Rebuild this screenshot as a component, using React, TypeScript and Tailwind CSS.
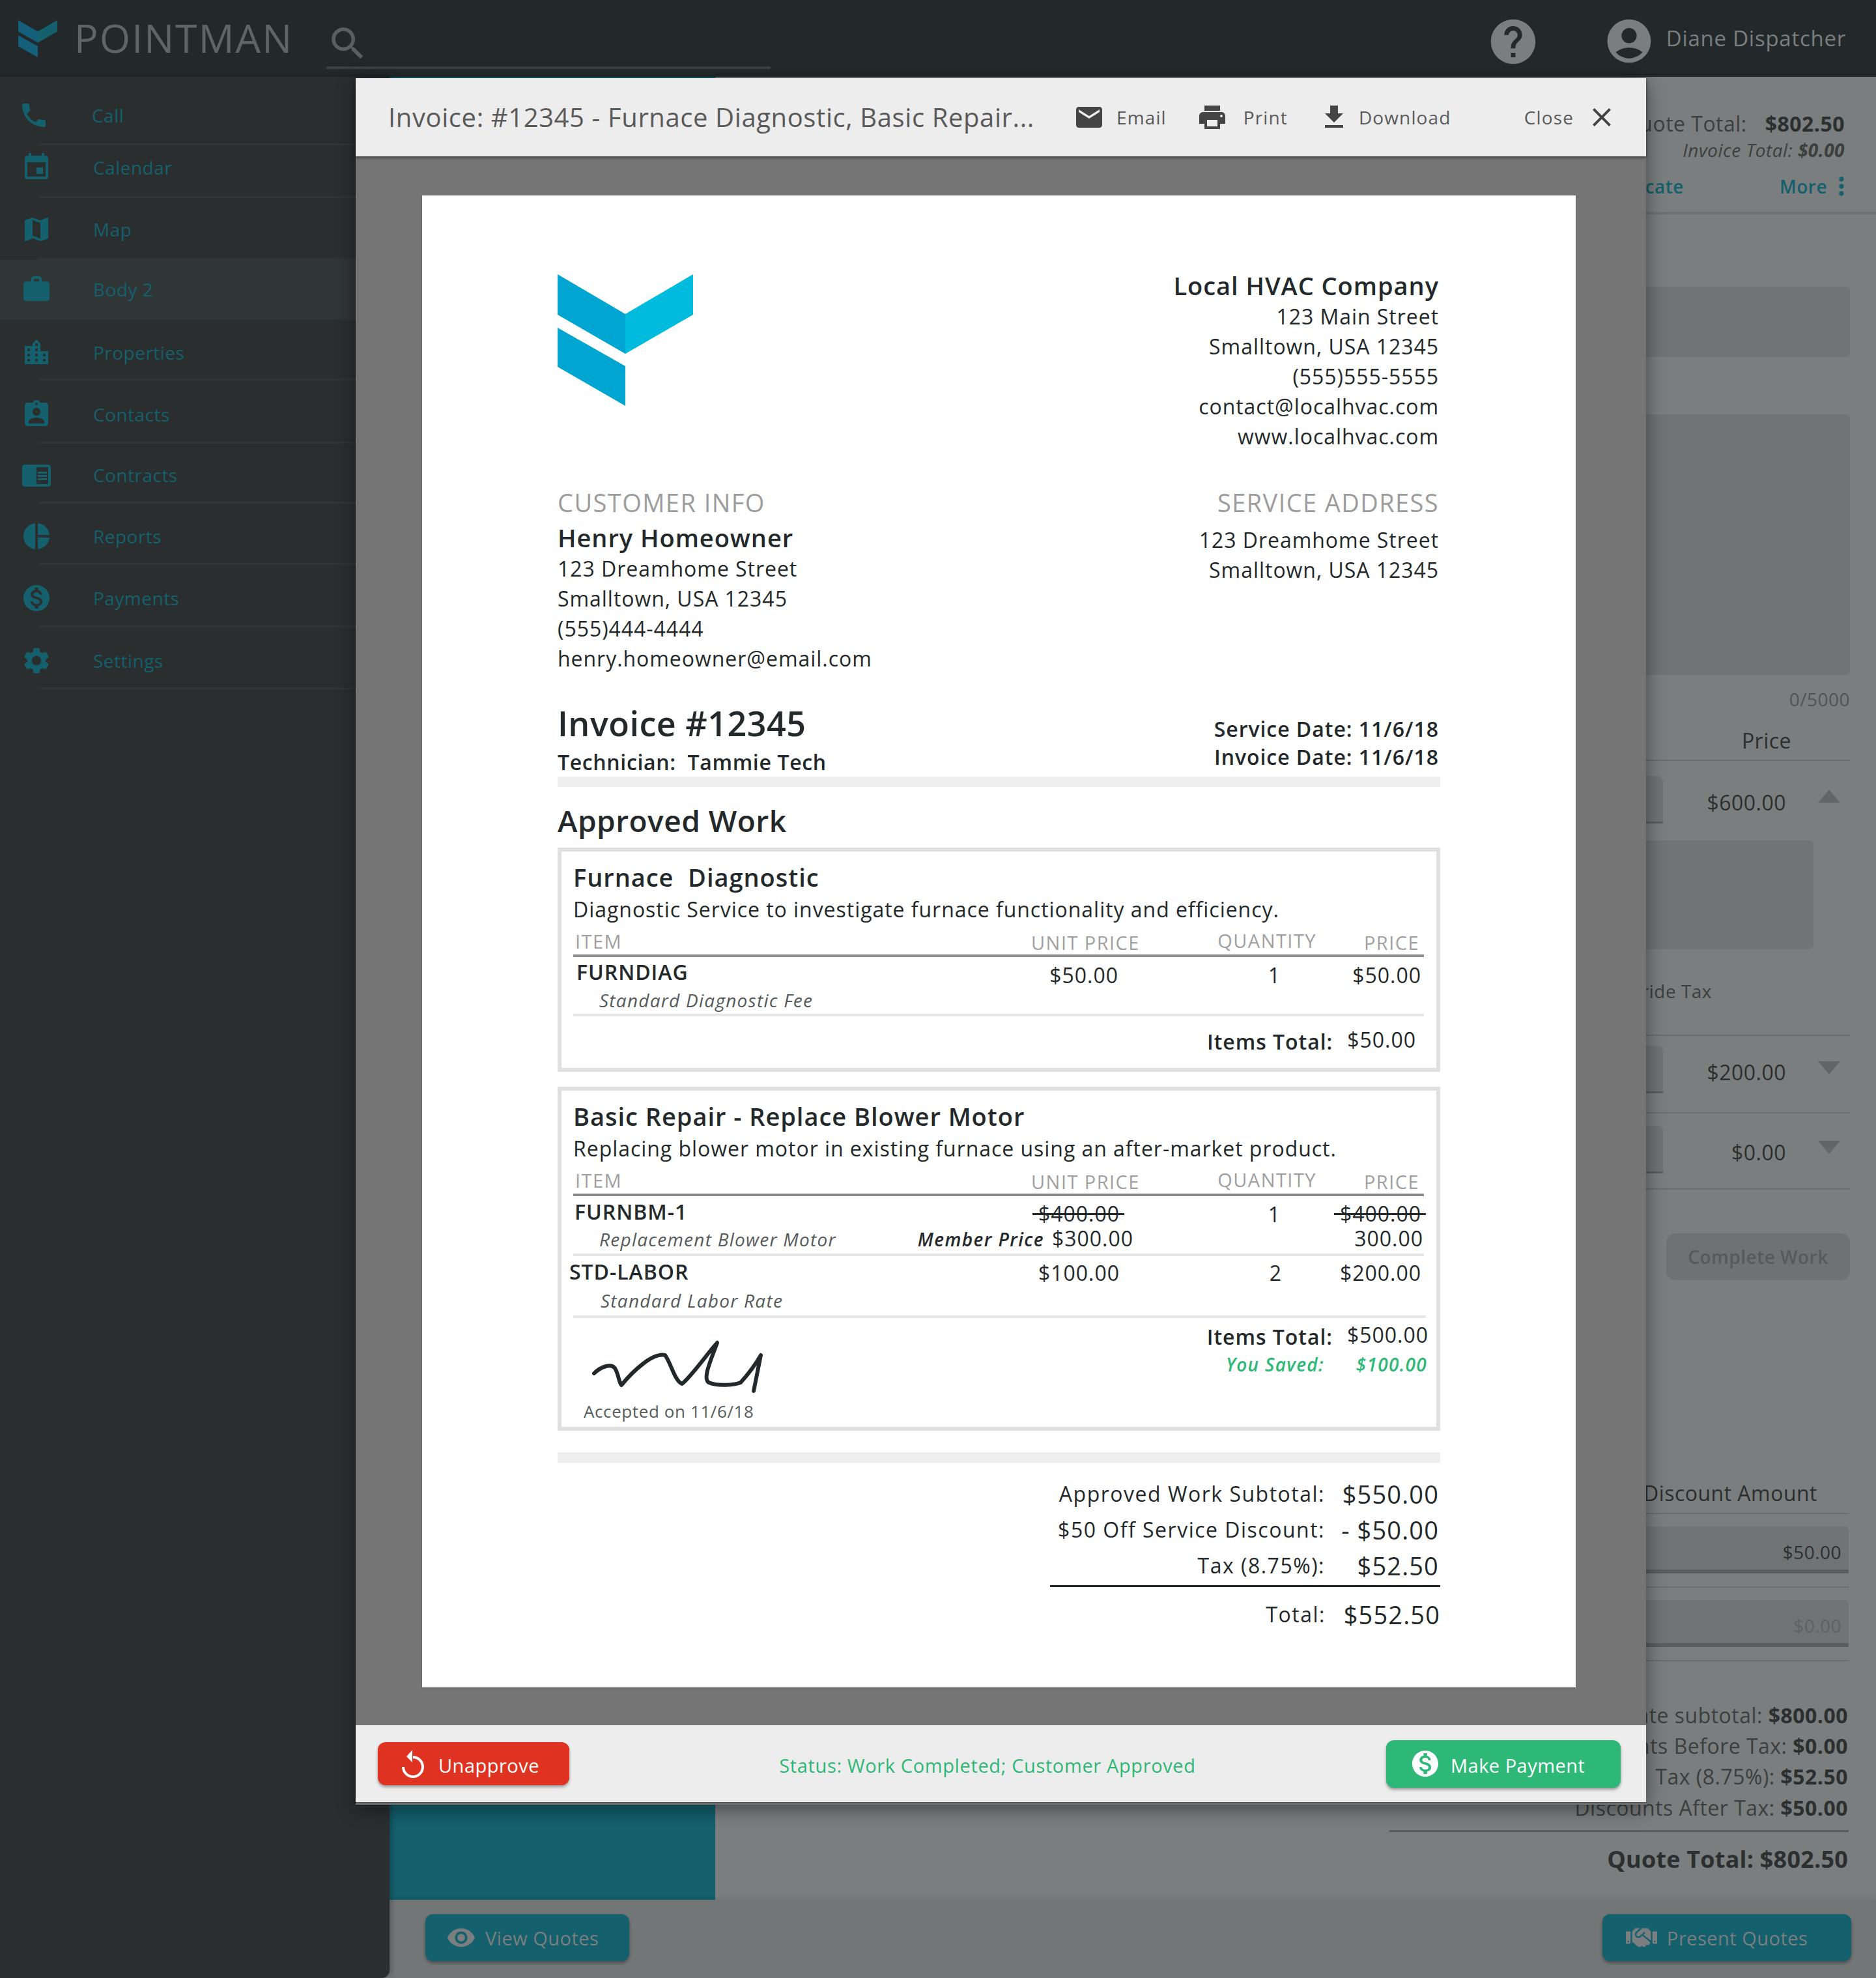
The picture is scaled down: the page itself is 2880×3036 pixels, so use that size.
import {
  MdPhone, MdEvent, MdMap, MdWork, MdLocationCity, MdAssignmentInd, MdChromeReaderMode, MdPieChart,
  MdMonetizationOn, MdSettings, MdEmail, MdPrint, MdFileDownload, MdClose, MdHelp, MdAccountCircle,
  MdVisibility, MdMoreVert, MdSearch,
} from "react-icons/md";
import { FaHandshake } from "react-icons/fa";

const navItems = [
  { label: "Call", Icon: MdPhone, row: "h-[105px] pt-[12px]", textPos: "ml-[65px]", iconPos: "ml-[28px]" },
  { label: "Calendar", Icon: MdEvent, row: "h-[81px] pb-[14px]", textPos: "ml-[63px]", iconPos: "ml-[32px]" },
  { label: "Map", Icon: MdMap, row: "h-[95px]", textPos: "ml-[63px]", iconPos: "ml-[32px]" },
  { label: "Body 2", Icon: MdWork, row: "h-[92px] pb-[2px] bg-[#303536]", textPos: "ml-[63px]", iconPos: "ml-[32px]" },
  { label: "Properties", Icon: MdLocationCity, row: "h-[93px] pt-[6px]", textPos: "ml-[63px]", iconPos: "ml-[32px]" },
  { label: "Contacts", Icon: MdAssignmentInd, row: "h-[97px] pt-[6px]", textPos: "ml-[63px]", iconPos: "ml-[32px]" },
  { label: "Contracts", Icon: MdChromeReaderMode, row: "h-[92px] pt-[4px]", textPos: "ml-[63px]", iconPos: "ml-[32px]" },
  { label: "Reports", Icon: MdPieChart, row: "h-[94px] pt-[6px]", textPos: "ml-[63px]", iconPos: "ml-[32px]" },
  { label: "Payments", Icon: MdMonetizationOn, row: "h-[96px] pt-[6px]", textPos: "ml-[63px]", iconPos: "ml-[32px]" },
  { label: "Settings", Icon: MdSettings, row: "h-[95px] pt-[6px]", textPos: "ml-[63px]", iconPos: "ml-[32px]" },
];

function Logo({ className, left, right }: { className: string; left: string; right: string }) {
  return (
    <svg viewBox="0 0 208 202" preserveAspectRatio="none" className={className}>
      <polygon points="0,0 104,61 104,122 0,62" fill={left} />
      <polygon points="104,61 208,0 208,62 104,122" fill={right} />
      <polygon points="0,82 104,141 104,202 0,142" fill={left} />
    </svg>
  );
}

function Header() {
  return (
    <div className="h-[118px] shrink-0 bg-[#23292a] flex items-start">
      <Logo className="w-[60px] h-[57px] ml-[28px] mt-[31px]" left="#14607a" right="#14606d" />
      <div className="ml-[26px] w-[387px] h-[114px] flex items-center text-[61px] leading-none tracking-[2px] text-[#5f6464]">POINTMAN</div>
      <div className="mt-[28px] w-[682px] h-[78px] border-b-4 border-[#3c4242]">
        <MdSearch size={66} className="text-[#5a5f5f] mt-[6px]" />
      </div>
      <div className="ml-auto flex items-center h-[118px]">
        <MdHelp size={82} className="text-[#7a7e7e] mb-[-10px]" />
        <MdAccountCircle size={80} className="text-[#7a7e7e] ml-[97px] mb-[-8px]" />
        <span className="ml-[17px] mr-[46px] text-[33px] tracking-[0.75px] text-[#7a7e7e]">Diane Dispatcher</span>
      </div>
    </div>
  );
}

function Sidebar() {
  return (
    <div className="w-[598px] shrink-0 bg-[#2a2e2f] rounded-br-[12px] shadow-[2px_0_8px_rgba(0,0,0,0.3)] z-10">
      {navItems.map(({ label, Icon, row, textPos, iconPos }) => (
        <div key={label}>
          <div className={`flex items-center ${row}`}>
            <Icon size={48} className={`shrink-0 text-[#14606d] ${iconPos}`} />
            <span className={`text-[28px] text-[#14606d] ${textPos}`}>{label}</span>
          </div>
          <div className="ml-[60px] h-[3px] bg-[#303536] -mt-[3px]" />
        </div>
      ))}
    </div>
  );
}

function InputStub() {
  return <div className="w-[300px] h-[73px] rounded-t-[8px] bg-[#707474] border-b-[3px] border-[#5a5e5e]" />;
}

function Arrow({ up }: { up?: boolean }) {
  return (
    <svg viewBox="0 0 34 20" className="w-[34px] h-[20px] ml-[49px]">
      <polygon points={up ? "0,20 17,0 34,20" : "0,0 17,20 34,0"} fill="#626666" />
    </svg>
  );
}

function PriceRow({ price, arrowUp, rowClass, arrowClass }: { price: string; arrowUp?: boolean; rowClass: string; arrowClass: string }) {
  return (
    <div className={`flex justify-end pr-[15px] ${rowClass}`}>
      <InputStub />
      <div className="w-[189px] h-[73px] flex items-center justify-end pt-[8px] text-[32px] font-medium text-[#2b2f2f]">{price}</div>
      <div className={arrowClass}><Arrow up={arrowUp} /></div>
    </div>
  );
}

function Behind() {
  return (
    <div className="flex-1 flex min-h-0">
      <div className="w-[500px] shrink-0 bg-[#14606d]" />
      <div className="flex-1 flex flex-col pr-[40px]">
        <div className="h-[211px] shrink-0 border-b-4 border-[#6e7272] -mr-[40px] pr-[48px] pt-[50px] flex flex-col items-end">
          <div className="h-[44px] flex items-center text-[32px] text-[#3b3f3f]">
            Quote Total:<span className="ml-[28px] font-bold text-[#2b2f2f]">$802.50</span>
          </div>
          <div className="h-[40px] -mt-[2px] flex items-center text-[28px] italic text-[#3b3f3f]">
            Invoice Total:&nbsp;<span className="font-bold">$0.00</span>
          </div>
          <div className="h-[44px] mt-[14px] mr-[-2px] flex items-center text-[28px] font-semibold text-[#14606d]">
            <span>Duplicate</span>
            <span className="ml-[147px]">More</span>
            <MdMoreVert size={44} className="-mr-[15px]" />
          </div>
        </div>
        <div className="h-[108px] mt-[111px] shrink-0 bg-[#707474] rounded-[6px]" />
        <div className="h-[400px] mt-[88px] shrink-0 bg-[#707474] rounded-[6px]" />
        <div className="h-[36px] mt-[19px] flex items-center justify-end text-[28px] text-[#505454]">0/5000</div>
        <div className="h-[44px] mt-[24px] flex items-center justify-end text-[32px] font-medium text-[#2b2f2f]">
          <span className="mr-[90px]">Price</span>
        </div>
        <div className="mt-[7px] h-[2px] shrink-0 bg-[#6a6e6e]" />
        <PriceRow price="$600.00" arrowUp rowClass="mt-[23px]" arrowClass="mt-[21px]" />
        <div className="h-[167px] mt-[26px] mr-[56px] shrink-0 bg-[#707474] rounded-[6px]" />
        <div className="h-[40px] mt-[44px] pr-[212px] flex items-center justify-end text-[28px] text-[#3b3f3f]">Override Tax</div>
        <div className="mt-[47px] h-[2px] shrink-0 bg-[#6a6e6e]" />
        <PriceRow price="$200.00" rowClass="mt-[15px]" arrowClass="mt-[24px]" />
        <div className="mt-[29px] h-[2px] shrink-0 bg-[#6a6e6e]" />
        <PriceRow price="$0.00" rowClass="mt-[19px]" arrowClass="mt-[23px]" />
        <div className="mt-[23px] h-[2px] shrink-0 bg-[#6a6e6e]" />
        <div className="mt-[67px] ml-auto w-[282px] h-[72px] shrink-0 rounded-[14px] bg-[#6e7272] flex items-center justify-center text-[28px] font-semibold text-[#565a5a]">
          Complete Work
        </div>
        <div className="mt-[305px] h-[44px] pr-[50px] flex items-center justify-end text-[32px] font-medium text-[#2b2f2f]">Discount Amount</div>
        <div className="mt-[8px] h-[2px] mr-[2px] shrink-0 bg-[#6a6e6e]" />
        <div className="mt-[19px] h-[72px] mr-[2px] shrink-0 rounded-t-[6px] bg-[#707474] border-b-[6px] border-[#5a5e5e] flex items-end justify-end pr-[11px] pb-[6px] text-[28px] text-[#2b2f2f]">$50.00</div>
        <div className="mt-[20px] h-[2px] mr-[2px] shrink-0 bg-[#6a6e6e]" />
        <div className="mt-[19px] h-[72px] mr-[2px] shrink-0 rounded-t-[6px] bg-[#707474] border-b-[6px] border-[#5a5e5e] flex items-end justify-end pr-[11px] pb-[6px] text-[28px] text-[#5e6262]">$0.00</div>
        <div className="mt-[20px] h-[2px] mr-[2px] shrink-0 bg-[#6a6e6e]" />
        <div className="mt-[59px] pr-[3px] flex flex-col items-end text-[32px] text-[#3b3f3f]">
          <div className="h-[47px] flex items-center">Estimate subtotal:&nbsp;<b className="text-[#2b2f2f]">$800.00</b></div>
          <div className="h-[47px] flex items-center">Discounts Before Tax:&nbsp;<b className="text-[#2b2f2f]">$0.00</b></div>
          <div className="h-[48px] flex items-center">Tax (8.75%):&nbsp;<b className="text-[#2b2f2f]">$52.50</b></div>
          <div className="h-[48px] flex items-center">Discounts After Tax:&nbsp;<b className="text-[#2b2f2f]">$50.00</b></div>
        </div>
        <div className="mt-[10px] ml-auto mr-[2px] w-[705px] h-[3px] shrink-0 bg-[#565a5a]" />
        <div className="mt-[17px] pr-[3px] h-[50px] flex items-center justify-end text-[36px] tracking-[0.2px] font-bold text-[#2b2f2f]">Quote Total: $802.50</div>
      </div>
    </div>
  );
}

function BehindFooter() {
  return (
    <div className="h-[120px] shrink-0 bg-[#727676] shadow-[0_-4px_8px_rgba(0,0,0,0.05)] flex items-start justify-between pt-[22px] pl-[55px] pr-[38px] z-[1]">
      <div className="w-[313px] h-[72px] rounded-[12px] bg-[#14606d] shadow-[0_3px_5px_rgba(0,0,0,0.35)] flex items-center pl-[32px] text-[29px] font-medium text-[#7a7e7e]">
        <MdVisibility size={46} />
        <span className="ml-[14px] pt-[2px]">View Quotes</span>
      </div>
      <div className="w-[382px] h-[72px] rounded-[12px] bg-[#14606d] shadow-[0_3px_5px_rgba(0,0,0,0.35)] flex items-center pl-[36px] text-[29px] font-medium text-[#7a7e7e]">
        <FaHandshake size={48} />
        <span className="ml-[15px] pt-[2px]">Present Quotes</span>
      </div>
    </div>
  );
}

function TableHead() {
  return (
    <div className="mt-[5px] ml-[18px] mr-[19px] border-b-4 border-[#8a8a8a] grid grid-cols-[703px_164px_274px_164px] h-[45px] text-[29px] tracking-[1.45px] text-[#a0a0a0] text-right whitespace-nowrap">
      <div className="text-left pl-[3px] leading-[42px]">ITEM</div>
      <div className="leading-[46px]">UNIT PRICE</div>
      <div className="leading-[40px]">QUANTITY</div>
      <div className="pr-[6px] leading-[46px]">PRICE</div>
    </div>
  );
}

function Struck({ children }: { children: string }) {
  return (
    <span className="relative inline-block">
      {children}
      <span className="absolute -left-[9px] -right-[7px] top-[18px] h-[3px] bg-[#23292a]" />
    </span>
  );
}

function Invoice() {
  return (
    <div className="mt-[60px] ml-[102px] mr-[108px] h-[2290px] shrink-0 bg-white pt-[117px] px-[208px] text-[#23292a] text-[32px] tracking-[0.96px] shadow-[0_1px_2px_rgba(0,0,0,0.3)]">
      <div className="flex justify-between">
        <Logo className="w-[208px] h-[202px] mt-[4px]" left="#00a5d2" right="#00bbdd" />
        <div className="text-right pr-[2px] leading-[46px]">
          <div className="-mt-[2px] mb-[2px] text-[38px] font-semibold">Local HVAC Company</div>
          <div>123 Main Street</div>
          <div>Smalltown, USA 12345</div>
          <div>(555)555-5555</div>
          <div>contact@localhvac.com</div>
          <div>www.localhvac.com</div>
        </div>
      </div>

      <div className="mt-[55px] flex justify-between leading-[46px]">
        <div>
          <div className="text-[38px] tracking-[1.45px] text-[#9c9c9c] font-medium">CUSTOMER INFO</div>
          <div className="mt-[8px] mb-[2px] text-[38px] font-semibold">Henry Homeowner</div>
          <div>123 Dreamhome Street</div>
          <div>Smalltown, USA 12345</div>
          <div>(555)444-4444</div>
          <div>henry.homeowner@email.com</div>
        </div>
        <div className="text-right pr-[2px]">
          <div className="text-[38px] tracking-[1.4px] text-[#9c9c9c] font-medium">SERVICE ADDRESS</div>
          <div className="mt-[12px]">123 Dreamhome Street</div>
          <div>Smalltown, USA 12345</div>
        </div>
      </div>

      <div className="mt-[44px] h-[114px] flex justify-between">
        <div>
          <div className="text-[52px] tracking-[0.5px] leading-[64px] font-semibold">Invoice #12345</div>
          <div className="mt-[6px] text-[32px] tracking-[0.65px] leading-[44px] font-semibold whitespace-pre">Technician:  Tammie Tech</div>
        </div>
        <div className="pt-[19px] pr-[2px] text-right font-semibold leading-[43px]">
          <div>Service Date: 11/6/18</div>
          <div>Invoice Date: 11/6/18</div>
        </div>
      </div>
      <div className="h-[16px] bg-[#eeeeee]" />

      <div className="mt-[21px] mb-[12px] text-[46px] tracking-[0.5px] leading-[60px] font-semibold">Approved Work</div>

      <div className="h-[344px] border-[6px] border-[#e0e0e0]">
        <div className="mt-[16px] mb-[4px] ml-[18px] text-[38px] leading-[46px] font-semibold whitespace-pre">Furnace  Diagnostic</div>
        <div className="ml-[18px] leading-[46px]">Diagnostic Service to investigate furnace functionality and efficiency.</div>
        <TableHead />
        <div className="ml-[18px] mr-[19px] h-[91px] border-b-4 border-[#e6e6e6] grid grid-cols-[703px_164px_274px_164px] text-right">
          <div className="text-left">
            <div className="pl-[5px] leading-[46px] font-semibold">FURNDIAG</div>
            <div className="pl-[40px] leading-[40px] text-[28px] tracking-[1.25px] italic text-[#555a5a]">Standard Diagnostic Fee</div>
          </div>
          <div className="pt-[5px] pr-[30px] leading-[46px] font-medium">$50.00</div>
          <div className="pt-[5px] pr-[55px] leading-[46px] font-medium">1</div>
          <div className="pt-[5px] pr-[3px] leading-[46px] font-medium">$50.00</div>
        </div>
        <div className="mt-[13px] flex justify-end pr-[31px] leading-[46px] font-semibold">
          <span className="pt-[3px]">Items Total:</span>
          <span className="ml-[22px] font-medium">$50.00</span>
        </div>
      </div>

      <div className="mt-[23px] h-[528px] border-[6px] border-[#e0e0e0]">
        <div className="mt-[16px] mb-[4px] ml-[18px] text-[38px] leading-[46px] font-semibold">Basic Repair - Replace Blower Motor</div>
        <div className="ml-[18px] leading-[46px]">Replacing blower motor in existing furnace using an after-market product.</div>
        <TableHead />
        <div className="ml-[18px] mr-[19px] h-[92px] border-b-4 border-[#e6e6e6] grid grid-cols-[703px_164px_274px_164px] text-right">
          <div className="text-left">
            <div className="pl-[2px] pt-[2px] leading-[44px] font-semibold">FURNBM-1</div>
            <div className="pl-[40px] leading-[40px] text-[28px] tracking-[1.25px] italic text-[#555a5a]">Replacement Blower Motor</div>
          </div>
          <div className="pr-[7px] -ml-[300px] pt-[8px] font-medium">
            <div className="pr-[21px] leading-[38px]"><Struck>$400.00</Struck></div>
            <div className="leading-[37px]"><span className="italic font-semibold text-[28px] tracking-[1.44px] mr-[12px]">Member Price</span>$300.00</div>
          </div>
          <div className="pt-[8px] pr-[55px] leading-[39px] font-medium">1</div>
          <div className="pt-[8px] font-medium">
            <div className="pr-[3px] leading-[38px]"><Struck>$400.00</Struck></div>
            <div className="leading-[37px]">300.00</div>
          </div>
        </div>
        <div className="ml-[18px] mr-[16px] h-[95px] border-b-4 border-[#e6e6e6] grid grid-cols-[703px_164px_274px_164px] text-right">
          <div className="text-left">
            <div className="-ml-[6px] leading-[48px] font-semibold">STD-LABOR</div>
            <div className="pl-[42px] leading-[40px] text-[28px] tracking-[1.25px] italic text-[#555a5a]">Standard Labor Rate</div>
          </div>
          <div className="pt-[2px] pr-[28px] leading-[48px] font-medium">$100.00</div>
          <div className="pt-[2px] pr-[53px] leading-[48px] font-medium">2</div>
          <div className="pt-[2px] pr-[3px] leading-[48px] font-medium">$200.00</div>
        </div>
        <div className="flex justify-between">
          <div className="pl-[34px]">
            <svg viewBox="0 0 280 85" className="mt-[33px] ml-[6px] w-[280px] h-[85px]" fill="none" stroke="#23292a" strokeWidth="6" strokeLinejoin="round" strokeLinecap="round">
              <path d="M10 52 C20 42 36 36 42 44 C48 54 48 66 52 70 C70 48 100 20 119 24 C128 36 134 64 145 68 C160 56 185 20 199 5 C190 30 176 60 186 66 C200 72 225 70 235 66 C245 55 258 38 266 24 L255 79" />
            </svg>
            <div className="mt-[5px] text-[26px] tracking-[0.6px] leading-[40px] text-[#555a5a]">Accepted on 11/6/18</div>
          </div>
          <div className="pt-[5px] pr-[12px] flex flex-col items-end leading-[46px] font-semibold">
            <div className="flex">
              <span className="pt-[1px]">Items Total:</span>
              <span className="ml-[22px] -mt-[2px] font-medium">$500.00</span>
            </div>
            <div className="-mt-[4px] pr-[2px] text-[28px] tracking-[1.3px] italic text-[#2db877]">
              <span>You Saved:</span>
              <span className="ml-[49px]">$100.00</span>
            </div>
          </div>
        </div>
      </div>

      <div className="mt-[33px] h-[16px] bg-[#eeeeee]" />

      <div className="mt-[22px] flex flex-col items-end text-[32px] leading-[52px] tracking-[1.5px] font-medium">
        <div className="flex"><span>Approved Work Subtotal:</span><span className="w-[177px] pr-[2px] text-right text-[38px] tracking-[1.14px]">$550.00</span></div>
        <div className="mt-[3px] flex"><span>$50 Off Service Discount:</span><span className="w-[177px] pr-[2px] text-right text-[38px] tracking-[1.14px]">- $50.00</span></div>
        <div className="mt-[3px] flex"><span>Tax (8.75%):</span><span className="w-[177px] pr-[2px] text-right text-[38px] tracking-[1.14px]">$52.50</span></div>
        <div className="mt-[4px] w-[599px] h-[3px] bg-[#23292a]" />
        <div className="mt-[16px] flex"><span>Total:</span><span className="w-[176px] text-right text-[38px] tracking-[1.14px]">$552.50</span></div>
      </div>
    </div>
  );
}

function UndoIcon() {
  return (
    <svg viewBox="0 0 48 48" className="w-[48px] h-[48px] shrink-0" fill="none">
      <path d="M24 14 A15 15 0 1 1 9 29" stroke="white" strokeWidth="4" />
      <polygon points="23,3 14,13 23,22" fill="white" />
    </svg>
  );
}

function Modal() {
  return (
    <div className="absolute left-[546px] top-[120px] w-[1981px] h-[2650px] z-20 bg-[#757575] flex flex-col shadow-[0_6px_28px_rgba(0,0,0,0.45)]">
      <div className="h-[120px] shrink-0 bg-[#ededed] flex items-center shadow-[0_2px_4px_rgba(0,0,0,0.5)] text-[#5a5a5a] text-[28px] tracking-[1.12px] font-medium z-[1]">
        <span className="ml-[50px] w-[1052px] text-[40px] tracking-[0.6px] whitespace-nowrap">Invoice: #12345 - Furnace Diagnostic, Basic Repair...</span>
        <MdEmail size={48} className="text-[#444444]" />
        <span className="ml-[18px]">Email</span>
        <MdPrint size={48} className="ml-[46px] text-[#444444]" />
        <span className="ml-[24px]">Print</span>
        <MdFileDownload size={48} className="ml-[47px] text-[#444444]" />
        <span className="ml-[14px]">Download</span>
        <span className="ml-auto">Close</span>
        <MdClose size={48} className="ml-[19px] mr-[44px] text-[#444444]" />
      </div>
      <Invoice />
      <div className="mt-[58px] h-[120px] shrink-0 bg-[#ededed] flex items-center justify-between pl-[34px] pr-[39px] border-b-2 border-[#555555]">
        <div className="w-[294px] h-[66px] rounded-[12px] bg-[#e03221] shadow-[0_3px_4px_rgba(0,0,0,0.35)] flex items-center pl-[30px] text-white text-[29px] font-medium">
          <UndoIcon />
          <span className="ml-[15px] pt-[6px]">Unapprove</span>
        </div>
        <span className="ml-[30px] pt-[5px] text-[29px] tracking-[0.63px] font-medium text-[#2db877]">Status: Work Completed; Customer Approved</span>
        <div className="w-[360px] h-[73px] rounded-[12px] bg-[#2db877] shadow-[0_3px_4px_rgba(0,0,0,0.35)] flex items-center pl-[36px] text-white text-[29px] font-medium">
          <MdMonetizationOn size={48} />
          <span className="ml-[15px] pt-[6px]">Make Payment</span>
        </div>
      </div>
    </div>
  );
}

export default function App() {
  return (
    <div className="relative w-[2880px] h-[3036px] overflow-hidden flex flex-col bg-[#7a7e7e] tracking-[0.48px] font-['Open_Sans',sans-serif]">
      <Header />
      <div className="flex flex-1 min-h-0">
        <Sidebar />
        <div className="flex-1 flex flex-col min-w-0">
          <Behind />
          <BehindFooter />
        </div>
      </div>
      <Modal />
    </div>
  );
}
